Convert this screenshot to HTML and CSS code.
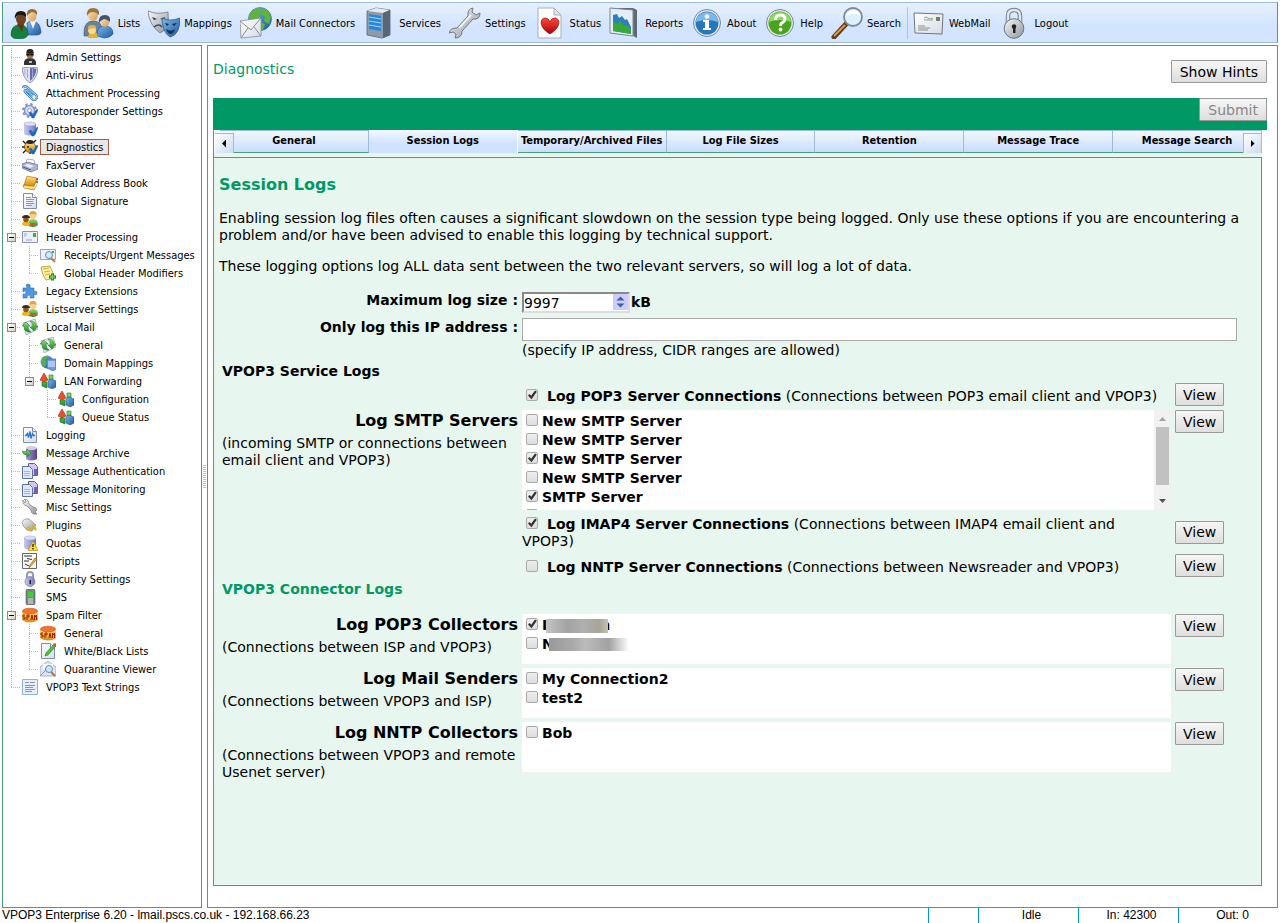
FILE: index.html
```
<!DOCTYPE html>
<html lang="en">
<head>
  <meta charset="UTF-8">
  <title>VPOP3 Enterprise - Diagnostics</title>
  <meta name="viewport" content="width=device-width, initial-scale=1.0">
  <link rel="stylesheet" href="styles.css">
</head>
<body>
  <!-- icon set -->
  <svg class="sprite" width="0" height="0" aria-hidden="true">
    <defs>
      <linearGradient id="gBlue" x2="1" y2="1"><stop offset="0" stop-color="#7db8ee"/><stop offset="1" stop-color="#1d5a9c"/></linearGradient>
      <linearGradient id="gGrey" x2="1" y2="1"><stop offset="0" stop-color="#fafafa"/><stop offset="1" stop-color="#8d959c"/></linearGradient>
      <linearGradient id="gLilac" x2="1"><stop offset="0" stop-color="#c8caf0"/><stop offset="1" stop-color="#7379b8"/></linearGradient>
      <linearGradient id="gPurple" x2="1"><stop offset="0" stop-color="#a99bd0"/><stop offset="1" stop-color="#55418c"/></linearGradient>
      <linearGradient id="gGreen" x2="0" y2="1"><stop offset="0" stop-color="#8fdc6e"/><stop offset="1" stop-color="#1f8f28"/></linearGradient>
      <linearGradient id="gGold" x2="0" y2="1"><stop offset="0" stop-color="#ffe277"/><stop offset="1" stop-color="#d68a10"/></linearGradient>
      <linearGradient id="gSkin" x2="1" y2="1"><stop offset="0" stop-color="#ffe3b0"/><stop offset="1" stop-color="#d69a50"/></linearGradient>
      <linearGradient id="gRed" x2="0" y2="1"><stop offset="0" stop-color="#ff4a3c"/><stop offset="1" stop-color="#a80008"/></linearGradient>
      <linearGradient id="gPaper" x2="1" y2="1"><stop offset="0" stop-color="#fff"/><stop offset="1" stop-color="#d5dce8"/></linearGradient>
    </defs>

    <symbol id="t-users" viewBox="0 0 32 32">
      <path d="M17 16q2-2 5-2 8 0 9 11 0 3-5 3h-8z" fill="url(#gBlue)" stroke="#1b4a7c" stroke-width=".6"/>
      <path d="M20 14l3 8 3-8z" fill="#f4f4f4"/>
      <ellipse cx="22" cy="9" rx="4.500" ry="5.500" fill="url(#gSkin)"/>
      <path d="M17 9q-1-7 5-7 6 0 5 6-2-3-5-3-3 1-5 4z" fill="#8e6f36"/>
      <path d="M1 28q0-10 8-10h3q6 1 6 10-2 4-9 4-7 0-8-4z" fill="#15803e" stroke="#0c5a2a" stroke-width=".6"/>
      <path d="M7 17l5 8 2-8z" fill="#5f3618"/>
      <ellipse cx="11" cy="12" rx="5" ry="6" fill="#6d421f"/>
      <path d="M5 12q-1-8 6-8 6 0 5 6-4-3-8-2-2 1-3 4z" fill="#1c1815"/>
    </symbol>
    <symbol id="t-lists" viewBox="0 0 32 32">
      <path d="M2 29q-1-15 9-15 9 0 9 9v6z" fill="#6a8399" stroke="#3f5468" stroke-width=".6"/>
      <ellipse cx="11" cy="8" rx="5" ry="6" fill="url(#gSkin)"/>
      <path d="M5 9q-1-8 6-8 7 0 6 7-3-3-6-3-4 0-6 4z" fill="#9a7340"/>
      <path d="M15 29q0-10 8-10 8 0 8 8-3 4-9 4z" fill="url(#gBlue)" stroke="#24588c" stroke-width=".6"/>
      <ellipse cx="23" cy="15" rx="4" ry="5" fill="url(#gSkin)"/>
      <path d="M17 16q-1-8 6-8 6 0 5 7-3-3-6-3-3 1-5 4z" fill="#45526a"/>
      <path d="M6 31q0-6 5-6 5 0 5 6z" fill="#e6b422"/>
      <circle cx="10" cy="23" r="4" fill="#ffd99b"/>
      <path d="M6 23q-1-5 4-5 5 0 4 4-4-2-8 1z" fill="#e0b04a"/>
    </symbol>
    <symbol id="t-masks" viewBox="0 0 32 32">
      <path d="M0 4q9 4 20 1 2 17-8 21Q1 18 0 4z" fill="url(#gGrey)" stroke="#6d747b" stroke-width=".8"/>
      <path d="M4 10l5 2-3 1zM12 12l5-2-1 3z" fill="#30363c"/>
      <path d="M6 20q5-4 8 0" fill="none" stroke="#454b52" stroke-width="1.500"/>
      <path d="M14 11q8 4 18 0 0 17-10 19-8-5-8-19z" fill="url(#gBlue)" stroke="#315d87" stroke-width=".8"/>
      <path d="M17 16l4 1-2 2zM24 17l5-1-3 3z" fill="#0e2742"/>
      <path d="M18 22q5 3 9 0-1 5-5 5-3-1-4-5z" fill="#143456"/>
    </symbol>
    <symbol id="t-mail" viewBox="0 0 32 32">
      <circle cx="20" cy="12" r="11.500" fill="url(#gBlue)" stroke="#2b5f91" stroke-width=".6"/>
      <path d="M9 9q2-7 10-8l3 3-3 3 2 4-6 3-2 4-4-4zM23 1q7 3 8 9l-2 7-5-3 1-4-4-3zM17 14l8 3-2 6h-4z" fill="#5eb53c"/>
      <path d="M0 14l21-3v18L1 31z" fill="url(#gPaper)" stroke="#8b8f94" stroke-width=".8"/>
      <path d="M0 14l11 9 10-12M1 31l7-10M21 29l-7-9" fill="none" stroke="#8b8f94"/>
    </symbol>
    <symbol id="t-server" viewBox="0 0 32 32">
      <path d="M4 4l9-3 14 2v25l-8 3-15-3z" fill="#8e9bab" stroke="#59646f" stroke-width=".8"/>
      <path d="M4 4l9-3 14 2-7 3z" fill="#e4eaf2"/>
      <path d="M20 6l7-3v25l-7 3z" fill="#596675"/>
      <path d="M6 7l12 2v15l-12-2z" fill="#2a86d6"/>
      <path d="M6 10l12 2M6 14l12 2M6 18l12 2" stroke="#9fd6ff" stroke-width="1.200"/>
    </symbol>
    <symbol id="t-wrench" viewBox="0 0 32 32">
      <path d="M24 1q-6 1-5 8L8 21q-7 0-8 5l4-1 3 2-1 4q7 0 7-7l11-12q7 1 7-6l-4 2-4-3z" fill="url(#gGrey)" stroke="#74797e"/>
      <path d="M10 21L22 8" stroke="#fff" stroke-width="1.500"/>
    </symbol>
    <symbol id="t-heart" viewBox="0 0 32 32">
      <path d="M4 1h16l7 7v23H4z" fill="#fdfdfd" stroke="#a7b0ba"/>
      <path d="M20 1v7h7z" fill="#dfe5ec" stroke="#a7b0ba"/>
      <path d="M16 27C4 20 6 11 11 11q4 0 5 4 1-4 5-4c5 0 7 9-5 16z" fill="url(#gRed)" stroke="#8d0005" stroke-width=".6"/>
    </symbol>
    <symbol id="t-chart" viewBox="0 0 32 32">
      <path d="M1 1h23l4 2v28l-4-2-23-3z" fill="#5f6b73"/>
      <path d="M1 1l23 2v26L1 26z" fill="#e3eef6" stroke="#7e888f"/>
      <path d="M4 8l4-1 2 4 3-2 3 4 2-1 4 8v7L4 24z" fill="#2c80bd"/>
      <path d="M4 14l4 3 4-3 3 5 3-1 4 5v4L4 24z" fill="#38a83b"/>
    </symbol>
    <symbol id="t-about" viewBox="0 0 32 32">
      <circle cx="16" cy="16" r="13.500" fill="#e4e9ee" stroke="#7d8790"/>
      <circle cx="16" cy="16" r="11.500" fill="#2478bd"/>
      <path d="M5 15a11 10 0 0 1 22 0q-11-4-22 0z" fill="#7db9e8"/>
      <circle cx="16" cy="9.500" r="2.300" fill="#fff"/>
      <path d="M12 13h6v8h2v2h-8v-2h2v-6h-2z" fill="#fff"/>
    </symbol>
    <symbol id="t-help" viewBox="0 0 32 32">
      <circle cx="16" cy="16" r="13.500" fill="#e4e9ee" stroke="#7d8790"/>
      <circle cx="16" cy="16" r="11.500" fill="#46a51c"/>
      <path d="M5 15a11 10 0 0 1 22 0q-11-4-22 0z" fill="#8fd768"/>
      <path d="M11.500 13q0-5 5-5 4.500 0 4.500 4 0 2-2.500 3.500-2 1-2 3.500" fill="none" stroke="#fff" stroke-width="3"/>
      <circle cx="16.500" cy="22.500" r="1.900" fill="#fff"/>
    </symbol>
    <symbol id="t-search" viewBox="0 0 32 32">
      <path d="M15 17L3 30" stroke="#60401c" stroke-width="5" stroke-linecap="round"/>
      <path d="M14 18L3 29" stroke="#d39a4e" stroke-width="2"/>
      <circle cx="22" cy="10" r="9" fill="#dcf0fd" stroke="#7f8a94" stroke-width="1.800"/>
      <path d="M15 9q2-6 8-6 5 0 6 5-7-3-14 1z" fill="#fff"/>
    </symbol>
    <symbol id="t-letter" viewBox="0 0 32 32">
      <path d="M1 6l29 1-1 20-27-1z" fill="url(#gPaper)" stroke="#73777b"/>
      <path d="M23 10h4v4h-4z" fill="#71805a"/>
      <path d="M11 11q2-2 4 0t5 0M11 13h9" stroke="#999" fill="none"/>
      <path d="M5 19h7M5 21h12M5 23h10" stroke="#8c8c8c"/>
    </symbol>
    <symbol id="t-lock" viewBox="0 0 32 32">
      <path d="M9 17V9q0-6 6-6t6 6v8" fill="none" stroke="#737e88" stroke-width="4.500"/>
      <path d="M9 17V9q0-6 6-6t6 6v8" fill="none" stroke="#dfe6ec" stroke-width="2.500"/>
      <circle cx="15" cy="21.500" r="9.800" fill="url(#gGrey)" stroke="#68737d"/>
      <circle cx="15" cy="19.500" r="2.200" fill="#222"/>
      <path d="M14 20h2.500v6H14z" fill="#222"/>
    </symbol>

    <symbol id="i-admin" viewBox="0 0 16 16">
      <path d="M2 16q-1-7 6-7t6 7z" fill="#303338"/>
      <ellipse cx="8" cy="5" rx="3.600" ry="4.500" fill="#a8713e"/>
      <path d="M4.500 4Q4 0 8 0t3.500 4z" fill="#272320"/>
      <path d="M4.500 4.500h7v2h-3v-1h-1v1h-3z" fill="#000"/>
      <path d="M7 12h3v2H7z" fill="#b8bec5"/>
    </symbol>
    <symbol id="i-shield" viewBox="0 0 16 16">
      <path d="M0 1q8-2 16 0-1 11-8 15Q1 12 0 1z" fill="#dfe2f2" stroke="#8f93b8"/>
      <path d="M8 1q3 0 6.500 1-1 8-6.500 12z" fill="#676db2"/>
      <path d="M3 2v6M5.500 2v9M10.500 2v9" stroke="#a3a7d2"/>
    </symbol>
    <symbol id="i-clip" viewBox="0 0 16 16">
      <path d="M1 3q1-3 4-1l9 8q2 3 0 4-2 2-4 0L3 7q-1-2 1-2l7 6" fill="none" stroke="#3c83c8" stroke-width="2.400"/>
      <path d="M1 3q1-3 4-1l9 8q2 3 0 4-2 2-4 0L3 7q-1-2 1-2l7 6" fill="none" stroke="#b4daf7" stroke-width="1"/>
    </symbol>
    <symbol id="i-tick" viewBox="0 0 16 16">
      <path d="M7 10l2-1 2 3 4-6 1 1-4 8h-2z" fill="#1766c8" stroke="#1766c8" stroke-width=".5"/>
    </symbol>
    <symbol id="i-gear" viewBox="0 0 16 16">
      <circle cx="7.500" cy="7.500" r="5" fill="#dce2f8" stroke="#8591c9" stroke-width="1.500"/>
      <circle cx="7.500" cy="7.500" r="6.500" fill="none" stroke="#8591c9" stroke-width="2" stroke-dasharray="2.500 2.600"/>
      <circle cx="7.500" cy="7.500" r="2" fill="#fff" stroke="#8591c9"/>
      <use href="#i-tick"/>
    </symbol>
    <symbol id="i-cyl" viewBox="0 0 16 16">
      <path d="M2 3v10q5 3 12 0V3z" fill="url(#gLilac)"/>
      <ellipse cx="8" cy="3" rx="6" ry="2" fill="#dcdef7" stroke="#9296cb" stroke-width=".5"/>
    </symbol>
    <symbol id="i-database" viewBox="0 0 16 16"><use href="#i-cyl"/><use href="#i-tick"/></symbol>
    <symbol id="i-bug" viewBox="0 0 16 16">
      <path d="M1 2l4 4M14 1l-4 4M0 8h4M1 14l4-4M15 8h-4M8 12v3" stroke="#161616" stroke-width="1.300"/>
      <circle cx="8" cy="8" r="5.500" fill="url(#gGold)" stroke="#654100" stroke-width=".7"/>
      <path d="M4 4q0-3 4-3t4 3q-4 2-8 0z" fill="#24231f"/>
      <circle cx="6" cy="8" r="1" fill="#222"/>
      <use href="#i-tick"/>
    </symbol>
    <symbol id="i-fax" viewBox="0 0 16 16">
      <path d="M4 6l1-4 7 1 1 4z" fill="#fff" stroke="#8c93ac" stroke-width=".7"/>
      <path d="M0 7l6-2 10 3v4l-7 3-9-4z" fill="#aab2d6" stroke="#656d95" stroke-width=".7"/>
      <path d="M2 8l4-1 6 2-4 2z" fill="#eef1fc"/>
      <path d="M1 10l8 3" stroke="#4d5580"/>
    </symbol>
    <symbol id="i-book" viewBox="0 0 16 16">
      <path d="M5 1l10 2-2 8-11-1z" fill="url(#gGold)" stroke="#9d690b" stroke-width=".6"/>
      <path d="M1 10l11 1 3-7v5l-3 6-10-2z" fill="#f1c24b" stroke="#a5751c" stroke-width=".6"/>
      <path d="M2 12l10 1 3-5" fill="none" stroke="#fff" stroke-width="1"/>
      <path d="M14 3h2v2h-2z" fill="#d9412b"/><path d="M14 6h2v2h-2z" fill="#3da53a"/>
    </symbol>
    <symbol id="i-doc" viewBox="0 0 16 16">
      <path d="M1.500 .5h9l4 4v11h-13z" fill="url(#gPaper)" stroke="#7b8fae"/>
      <path d="M10.500 .5v4h4" fill="#fff" stroke="#7b8fae"/>
    </symbol>
    <symbol id="i-sign" viewBox="0 0 16 16">
      <use href="#i-doc"/><path d="M4 4.500h5M4 6.500h8M4 8.500h7M4 10.500h8M4 12.500h6" stroke="#8b98b0"/>
    </symbol>
    <symbol id="i-groups" viewBox="0 0 16 16">
      <path d="M6 15q0-7 5-7t5 6q-2 2-5 2z" fill="url(#gGreen)"/>
      <circle cx="11" cy="4.500" r="3.400" fill="#f8cf8d"/>
      <path d="M7.500 4Q7 0 11 0t3.500 4q-3-2-7 0z" fill="#dca542"/>
      <path d="M0 14q0-4 4-4t4 4q-4 2-8 0z" fill="#e7bb1b"/>
      <path d="M8 12h5v3H8z" fill="#d5532f"/>
      <circle cx="4" cy="8.500" r="2.800" fill="#8d5524"/>
      <path d="M0 7q0-3 4-3t4 3z" fill="#3d2c1c"/>
    </symbol>
    <symbol id="i-header" viewBox="0 0 16 16">
      <path d="M.5 2.500h15v11H.5z" fill="#eef0f9" stroke="#8c93bb"/>
      <path d="M11 4h3v4h-3z" fill="#46a843"/><path d="M2 5h3M2 7h2M4 11h6" stroke="#9aa1c2"/>
    </symbol>
    <symbol id="i-lens" viewBox="0 0 16 16">
      <path d="M11 11l4 4" stroke="#b77d40" stroke-width="2"/>
      <circle cx="9" cy="8" r="3.500" fill="#c4eafe" stroke="#6e8bae"/>
    </symbol>
    <symbol id="i-receipt" viewBox="0 0 16 16">
      <path d="M.5 2.500h15v10H.5z" fill="#eef0f9" stroke="#9aa1c2"/><path d="M12 4h2v2h-2z" fill="#46a843"/><use href="#i-lens"/>
    </symbol>
    <symbol id="i-modify" viewBox="0 0 16 16">
      <path d="M1 2l9-1q2 4 5 12l-9 2Q2 10 1 2z" fill="#fff0a3" stroke="#c5a93e"/>
      <path d="M3 4l6-1M4 7l6-1M5 10l5-1" stroke="#c8aa4c"/>
      <path d="M9 12h7M12.500 8.500v7" stroke="#19762a" stroke-width="3"/><path d="M10 12h5M12.500 9.500v5" stroke="#76d95a" stroke-width="1.400"/>
    </symbol>
    <symbol id="i-puzzle" viewBox="0 0 16 16">
      <path d="M1 5h4q-2-4 1-4t2 4h4v4q3-2 3 1t-3 1v4H8q1-3-1-3t-2 3H1v-4q3 1 3-1.500T1 9z" fill="#4f97dc" stroke="#2c6cae" stroke-width=".6"/>
    </symbol>
    <symbol id="i-local" viewBox="0 0 16 16">
      <path d="M1 4l12-4 3 10-12 6z" fill="#e6e9f3" stroke="#949cb2" stroke-width=".7"/>
      <path d="M0 7l4-4 4 4H6q0 4 3 6-7 1-7-6z" fill="url(#gGreen)" stroke="#1b7423" stroke-width=".5"/>
      <path d="M16 7l-4 5-4-4h2q1-4-2-6 6 0 6 5z" fill="url(#gGreen)" stroke="#1b7423" stroke-width=".5"/>
    </symbol>
    <symbol id="i-domain" viewBox="0 0 16 16">
      <circle cx="7" cy="7" r="6.500" fill="url(#gBlue)"/>
      <path d="M2 3q4-3 6-2L6 5l1 3-3 4Q0 9 2 3z" fill="#55ad55"/>
      <path d="M7 4h9v10l-3 2-6-3z" fill="#6f9ee0" stroke="#395c93" stroke-width=".6"/>
      <path d="M8 7h7M8 9h7M8 11h7" stroke="#e4f1ff"/>
    </symbol>
    <symbol id="i-lan" viewBox="0 0 16 16">
      <path d="M4 0l4 7-4 2-4-2z" fill="#ee4c2a" stroke="#a62a13" stroke-width=".6"/>
      <path d="M9 2h4v5H9zM2 9h5v6l-5-2z" fill="url(#gGreen)" stroke="#1b7423" stroke-width=".6"/>
      <path d="M8 8l3-2 5 2v6l-4 2-4-2z" fill="url(#gBlue)" stroke="#24528b" stroke-width=".6"/>
    </symbol>
    <symbol id="i-log" viewBox="0 0 16 16">
      <use href="#i-doc"/><path d="M3 8.500h1l1.500-2 1 4 1.500-6 1 7 1.500-5 1 2H13" fill="none" stroke="#2775ca" stroke-width="1.300"/>
    </symbol>
    <symbol id="i-archive" viewBox="0 0 16 16">
      <path d="M4 3v11q5 3 11 0V3z" fill="url(#gPurple)"/><ellipse cx="9.500" cy="3" rx="5.500" ry="2" fill="#d4cde9"/>
      <path d="M0 6q2 1 5 0V4l4 4-4 4v-2Q1 10 0 6z" fill="url(#gGreen)" stroke="#1b7423" stroke-width=".5"/>
    </symbol>
    <symbol id="i-msgs" viewBox="0 0 16 16">
      <path d="M6.500 .5h6l3 3v9h-9z" fill="#cfc9ec" stroke="#6a5a9e"/>
      <path d="M12 6h3v6h-3z" fill="#7c60ad"/>
      <path d="M.5 3.500h7l3 3v9H.5z" fill="#dfe8fa" stroke="#5b74a8"/><path d="M2 8.500h6M2 10.500h6M2 12.500h6" stroke="#a4b7dc"/>
    </symbol>
    <symbol id="i-tool" viewBox="0 0 16 16">
      <path d="M1 1q-1 5 4 6l4 4q0 5 6 4l-2-2 2-2q-1-3-4-3L7 5q0-5-5-5l2 2-1 2z" fill="url(#gGrey)" stroke="#777" stroke-width=".7"/>
    </symbol>
    <symbol id="i-plug" viewBox="0 0 16 16">
      <path d="M0 5q2-4 7-3l7 6-4 6-5-1Q0 9 0 5z" fill="url(#gGrey)" stroke="#777" stroke-width=".6"/>
      <path d="M6 10l3 4M11 9l3 4" stroke="#e3ae16" stroke-width="2.600"/>
    </symbol>
    <symbol id="i-quota" viewBox="0 0 16 16">
      <use href="#i-cyl"/><path d="M11 6l5 9.500H6z" fill="#ffd92c" stroke="#b78a00" stroke-width=".6"/><path d="M11 9v3M11 13v1.500" stroke="#222" stroke-width="1.300"/>
    </symbol>
    <symbol id="i-script" viewBox="0 0 16 16">
      <path d="M.5 .5h14v15H.5z" fill="#fafafa" stroke="#666"/><path d="M2 3h8M5 5.500l5 1M2 8h5M3 11l4 2" stroke="#333"/>
      <path d="M15 6l-6 7-2 2 1-3 5-7z" fill="#e5b437" stroke="#7d5c10" stroke-width=".6"/>
    </symbol>
    <symbol id="i-lock" viewBox="0 0 16 16">
      <path d="M5 8V4q0-3 3-3t3 3v4" fill="none" stroke="#9599b8" stroke-width="2"/>
      <circle cx="8" cy="10.500" r="5" fill="url(#gLilac)" stroke="#6d7192" stroke-width=".6"/><path d="M7.500 9h1.500v4H7.500z" fill="#222"/>
    </symbol>
    <symbol id="i-phone" viewBox="0 0 16 16">
      <rect x="4" y="0" width="9" height="16" rx="2" fill="#7e8589" stroke="#4c5256" stroke-width=".6"/>
      <path d="M6 3h5v5H6z" fill="#49c93c"/><path d="M6 10h5M6 12h5M6 14h5" stroke="#e2e6e8"/>
    </symbol>
    <symbol id="i-spam" viewBox="0 0 16 16">
      <path d="M0 4v9q8 5 16 0V4z" fill="url(#gGold)"/>
      <ellipse cx="8" cy="4" rx="7.500" ry="2.800" fill="#f3722c" stroke="#c4501a" stroke-width=".6"/>
      <path d="M3 8H1v2h2v2H1M5 13V8h2v2H5M9 13l1-5 1 5M12.500 13V8l1 2 1-2v5" fill="none" stroke="#a31b0c"/>
    </symbol>
    <symbol id="i-edit" viewBox="0 0 16 16">
      <use href="#i-doc"/><path d="M14 1l2 2-8 9-3 1 1-3z" fill="#54bd39" stroke="#1f7a22" stroke-width=".6"/><path d="M13 1l2-1 1 1v2l-1 1z" fill="#e2443a"/>
    </symbol>
    <symbol id="i-quarantine" viewBox="0 0 16 16">
      <path d="M0 6l8-6 8 6v9H0z" fill="#dfe3f8" stroke="#8d95c4" stroke-width=".7"/><path d="M3 3h10v6H3z" fill="#fff"/><path d="M0 15l6-6M16 15l-4-4" stroke="#8d95c4"/><use href="#i-lens"/>
    </symbol>
    <symbol id="i-text" viewBox="0 0 16 16">
      <path d="M.5 .5h15v15H.5z" fill="#e6effb" stroke="#91b1dc"/><path d="M3 3.500h4M8 3.500h5M3 6.500h10M3 8.500h8M3 10.500h10M3 12.500h7" stroke="#8795ab"/>
    </symbol>
  </svg>

  <nav class="toolbar">
    <a href="#"><svg><use href="#t-users"/></svg><span>Users</span></a>
    <a href="#"><svg><use href="#t-lists"/></svg><span>Lists</span></a>
    <a href="#"><svg><use href="#t-masks"/></svg><span>Mappings</span></a>
    <a href="#"><svg><use href="#t-mail"/></svg><span>Mail Connectors</span></a>
    <a href="#"><svg><use href="#t-server"/></svg><span>Services</span></a>
    <a href="#"><svg><use href="#t-wrench"/></svg><span>Settings</span></a>
    <a href="#"><svg><use href="#t-heart"/></svg><span>Status</span></a>
    <a href="#"><svg><use href="#t-chart"/></svg><span>Reports</span></a>
    <a href="#"><svg><use href="#t-about"/></svg><span>About</span></a>
    <a href="#"><svg><use href="#t-help"/></svg><span>Help</span></a>
    <a href="#" class="before-sep"><svg><use href="#t-search"/></svg><span>Search</span></a>
    <a href="#"><svg><use href="#t-letter"/></svg><span>WebMail</span></a>
    <a href="#"><svg><use href="#t-lock"/></svg><span>Logout</span></a>
  </nav>

  <div class="workspace">
    <aside class="sidebar">
      <ul class="tree">
        <li><div class="node"><svg><use href="#i-admin"/></svg><a href="#">Admin Settings</a></div></li>
        <li><div class="node"><svg><use href="#i-shield"/></svg><a href="#">Anti-virus</a></div></li>
        <li><div class="node"><svg><use href="#i-clip"/></svg><a href="#">Attachment Processing</a></div></li>
        <li><div class="node"><svg><use href="#i-gear"/></svg><a href="#">Autoresponder Settings</a></div></li>
        <li><div class="node"><svg><use href="#i-database"/></svg><a href="#">Database</a></div></li>
        <li><div class="node"><svg><use href="#i-bug"/></svg><a href="#" class="selected">Diagnostics</a></div></li>
        <li><div class="node"><svg><use href="#i-fax"/></svg><a href="#">FaxServer</a></div></li>
        <li><div class="node"><svg><use href="#i-book"/></svg><a href="#">Global Address Book</a></div></li>
        <li><div class="node"><svg><use href="#i-sign"/></svg><a href="#">Global Signature</a></div></li>
        <li><div class="node"><svg><use href="#i-groups"/></svg><a href="#">Groups</a></div></li>
        <li>
          <div class="node"><button class="toggle" aria-label="Collapse"></button><svg><use href="#i-header"/></svg><a href="#">Header Processing</a></div>
          <ul>
            <li><div class="node"><svg><use href="#i-receipt"/></svg><a href="#">Receipts/Urgent Messages</a></div></li>
            <li><div class="node"><svg><use href="#i-modify"/></svg><a href="#">Global Header Modifiers</a></div></li>
          </ul>
        </li>
        <li><div class="node"><svg><use href="#i-puzzle"/></svg><a href="#">Legacy Extensions</a></div></li>
        <li><div class="node"><svg><use href="#i-groups"/></svg><a href="#">Listserver Settings</a></div></li>
        <li>
          <div class="node"><button class="toggle" aria-label="Collapse"></button><svg><use href="#i-local"/></svg><a href="#">Local Mail</a></div>
          <ul>
            <li><div class="node"><svg><use href="#i-local"/></svg><a href="#">General</a></div></li>
            <li><div class="node"><svg><use href="#i-domain"/></svg><a href="#">Domain Mappings</a></div></li>
            <li>
              <div class="node"><button class="toggle" aria-label="Collapse"></button><svg><use href="#i-lan"/></svg><a href="#">LAN Forwarding</a></div>
              <ul>
                <li><div class="node"><svg><use href="#i-lan"/></svg><a href="#">Configuration</a></div></li>
                <li><div class="node"><svg><use href="#i-lan"/></svg><a href="#">Queue Status</a></div></li>
              </ul>
            </li>
          </ul>
        </li>
        <li><div class="node"><svg><use href="#i-log"/></svg><a href="#">Logging</a></div></li>
        <li><div class="node"><svg><use href="#i-archive"/></svg><a href="#">Message Archive</a></div></li>
        <li><div class="node"><svg><use href="#i-msgs"/></svg><a href="#">Message Authentication</a></div></li>
        <li><div class="node"><svg><use href="#i-msgs"/></svg><a href="#">Message Monitoring</a></div></li>
        <li><div class="node"><svg><use href="#i-tool"/></svg><a href="#">Misc Settings</a></div></li>
        <li><div class="node"><svg><use href="#i-plug"/></svg><a href="#">Plugins</a></div></li>
        <li><div class="node"><svg><use href="#i-quota"/></svg><a href="#">Quotas</a></div></li>
        <li><div class="node"><svg><use href="#i-script"/></svg><a href="#">Scripts</a></div></li>
        <li><div class="node"><svg><use href="#i-lock"/></svg><a href="#">Security Settings</a></div></li>
        <li><div class="node"><svg><use href="#i-phone"/></svg><a href="#">SMS</a></div></li>
        <li>
          <div class="node"><button class="toggle" aria-label="Collapse"></button><svg><use href="#i-spam"/></svg><a href="#">Spam Filter</a></div>
          <ul>
            <li><div class="node"><svg><use href="#i-spam"/></svg><a href="#">General</a></div></li>
            <li><div class="node"><svg><use href="#i-edit"/></svg><a href="#">White/Black Lists</a></div></li>
            <li><div class="node"><svg><use href="#i-quarantine"/></svg><a href="#">Quarantine Viewer</a></div></li>
          </ul>
        </li>
        <li><div class="node"><svg><use href="#i-text"/></svg><a href="#">VPOP3 Text Strings</a></div></li>
      </ul>
    </aside>
    <div class="splitter"><span class="grip"></span></div>

    <main class="content">
      <header class="page-head">
        <h1>Diagnostics</h1>
        <button class="btn">Show Hints</button>
      </header>
      <div class="action-bar"><button class="btn" disabled>Submit</button></div>

      <div class="tabs">
        <div class="tab-strip" role="tablist">
          <button class="tab" role="tab">General</button>
          <button class="tab active" role="tab" aria-selected="true">Session Logs</button>
          <button class="tab" role="tab">Temporary/Archived Files</button>
          <button class="tab" role="tab">Log File Sizes</button>
          <button class="tab" role="tab">Retention</button>
          <button class="tab" role="tab">Message Trace</button>
          <button class="tab" role="tab">Message Search</button>
          <button class="scroll-tabs prev" aria-label="Previous tabs"></button>
          <button class="scroll-tabs next" aria-label="Next tabs"></button>
        </div>

        <section class="panel">
          <h2>Session Logs</h2>
          <p>Enabling session log files often causes a significant slowdown on the session type being logged. Only use these options if you are encountering a problem and/or have been advised to enable this logging by technical support.</p>
          <p>These logging options log ALL data sent between the two relevant servers, so will log a lot of data.</p>

          <form class="settings">
            <label class="field-label" for="maxSize">Maximum log size :</label>
            <div class="wide size-field">
              <span class="spinner">
                <input type="text" inputmode="numeric" id="maxSize" value="9997">
                <svg viewBox="0 0 15 16" aria-hidden="true"><path d="M3.500 6.500l4-4 4 4zM3.500 9.500l4 4 4-4z" fill="#3565a5"/></svg>
              </span>
              <b>kB</b>
            </div>

            <label class="field-label" for="ipFilter">Only log this IP address :</label>
            <div class="wide">
              <input type="text" class="text-box" id="ipFilter">
              <div class="note">(specify IP address, CIDR ranges are allowed)</div>
            </div>

            <h3>VPOP3 Service Logs</h3>

            <label class="option"><input type="checkbox" checked><b>Log POP3 Server Connections</b> (Connections between POP3 email client and VPOP3)</label>
            <button type="button" class="btn">View</button>

            <div class="group">
              <h4>Log SMTP Servers</h4>
              <span>(incoming SMTP or connections between email client and VPOP3)</span>
            </div>
            <div class="list tall">
              <div class="items">
                <label><input type="checkbox">New SMTP Server</label>
                <label><input type="checkbox">New SMTP Server</label>
                <label><input type="checkbox" checked>New SMTP Server</label>
                <label><input type="checkbox">New SMTP Server</label>
                <label><input type="checkbox" checked>SMTP Server</label>
                <label><input type="checkbox" aria-label="Server 6"></label>
              </div>
              <div class="scrollbar" aria-hidden="true"><i class="up"></i><i class="thumb"></i><i class="down"></i></div>
            </div>
            <button type="button" class="btn">View</button>

            <label class="option two-line"><input type="checkbox" checked><b>Log IMAP4 Server Connections</b> (Connections between IMAP4 email client and VPOP3)</label>
            <button type="button" class="btn middle">View</button>

            <label class="option"><input type="checkbox"><b>Log NNTP Server Connections</b> (Connections between Newsreader and VPOP3)</label>
            <button type="button" class="btn">View</button>

            <h3 class="connector">VPOP3 Connector Logs</h3>

            <div class="group">
              <h4>Log POP3 Collectors</h4>
              <span>(Connections between ISP and VPOP3)</span>
            </div>
            <div class="list">
              <div class="items">
                <label><input type="checkbox" checked>I<span class="redacted"></span>n</label>
                <label><input type="checkbox">N<span class="redacted long"></span></label>
              </div>
            </div>
            <button type="button" class="btn">View</button>

            <div class="group">
              <h4>Log Mail Senders</h4>
              <span>(Connections between VPOP3 and ISP)</span>
            </div>
            <div class="list">
              <div class="items">
                <label><input type="checkbox">My Connection2</label>
                <label><input type="checkbox">test2</label>
              </div>
            </div>
            <button type="button" class="btn">View</button>

            <div class="group">
              <h4>Log NNTP Collectors</h4>
              <span>(Connections between VPOP3 and remote Usenet server)</span>
            </div>
            <div class="list">
              <div class="items">
                <label><input type="checkbox">Bob</label>
              </div>
            </div>
            <button type="button" class="btn">View</button>
          </form>
        </section>
      </div>
    </main>
  </div>

  <footer class="status">
    <span class="product">VPOP3 Enterprise 6.20 - lmail.pscs.co.uk - 192.168.66.23</span>
    <span class="cell small"></span>
    <span class="cell">Idle</span>
    <span class="cell">In: 42300</span>
    <span class="cell">Out: 0</span>
  </footer>
</body>
</html>
```
FILE: styles.css
```
* {
  box-sizing: border-box;
}

body {
  margin: 0;
  min-height: 100vh;
  display: flex;
  flex-direction: column;
  background: #fff;
  color: #000;
  font-family: "DejaVu Sans", Verdana, sans-serif;
  font-size: 14px;
  line-height: 17px;
}

button, input {
  font-family: inherit;
  font-size: inherit;
  color: inherit;
}

a {
  color: inherit;
  text-decoration: none;
}

.sprite {
  display: block;
}

/* toolbar */
.toolbar {
  display: flex;
  align-items: center;
  gap: 8px;
  height: 41px;
  margin: 2px 2px 2px;
  padding: 0 7px;
  border: 1px solid #9bbcdc;
  border-left-color: #4a9f78;
  border-right-color: #4a9f78;
  background: linear-gradient(#e6f1ff, #d2e4ff 60%, #d2e4ff);
  font-family: "DejaVu Sans Condensed", Tahoma, sans-serif;
  font-size: 11px;
}

.toolbar a {
  display: flex;
  align-items: center;
  gap: 4px;
  white-space: nowrap;
}

.toolbar span {
  padding-top: 2px;
}

.toolbar svg {
  width: 32px;
  height: 32px;
}

.toolbar .before-sep {
  padding-right: 6px;
  margin-right: -3px;
  border-right: 1px solid #a9c6e8;
}

/* panes */
.workspace {
  flex: 1;
  display: flex;
  margin: 0 2px;
}

.sidebar {
  width: 200px;
  flex: none;
  border: 1px solid #4a9f78;
  padding: 2px 0 0 8px;
  font-family: "DejaVu Sans Condensed", Tahoma, sans-serif;
  font-size: 11px;
}

.splitter {
  width: 5px;
  display: flex;
  align-items: center;
  justify-content: center;
}

.grip {
  width: 3px;
  height: 24px;
  background: repeating-linear-gradient(#bbb 0 1px, #fff 1px 2px);
}

/* tree */
.tree, .tree ul {
  list-style: none;
  margin: 0;
  padding: 0;
}

.tree ul {
  margin-left: 7px;
}

.tree li {
  padding-left: 11px;
  background:
    repeating-linear-gradient(#bbb 0 1px, transparent 1px 2px) 0 0 / 1px 100% no-repeat,
    repeating-linear-gradient(to right, #bbb 0 1px, transparent 1px 2px) 0 9px / 9px 1px no-repeat;
}

.tree li:last-child {
  background-size: 1px 9px, 9px 1px;
}

.node {
  display: flex;
  align-items: center;
  height: 18px;
}

.node svg {
  width: 16px;
  height: 16px;
  flex: none;
  margin-right: 2px;
}

.node a {
  padding: 1px 5px 0;
  border: 1px solid transparent;
  line-height: 13px;
  white-space: nowrap;
}

.node .selected {
  border-color: #a05c48;
  background: #e9e6ea;
}

.toggle {
  width: 9px;
  height: 9px;
  flex: none;
  margin: 0 6px 0 -15px;
  padding: 0;
  border: 1px solid #7b8da5;
  background: linear-gradient(#000, #000) center / 5px 1px no-repeat, linear-gradient(135deg, #fff, #d5cfc3);
}

/* main pane */
.content {
  flex: 1;
  min-width: 0;
  display: flex;
  flex-direction: column;
  border: 1px solid #4a9f78;
  padding: 14px 10px 21px 5px;
}

.page-head {
  display: flex;
  justify-content: space-between;
  align-items: flex-start;
  height: 38px;
}

h1 {
  margin: 0;
  font-size: 14px;
  line-height: 19px;
  font-weight: normal;
  color: #096;
}

.btn {
  height: 23px;
  padding: 0 7px;
  border: 1px solid #999;
  border-radius: 1px;
  background: linear-gradient(#f6f6f6, #dedede);
  line-height: 20px;
  white-space: nowrap;
}

.btn:disabled {
  color: #888;
}

.page-head .btn, .action-bar .btn {
  padding: 0 8px;
}

.action-bar {
  display: flex;
  justify-content: flex-end;
  height: 32px;
  background: #096;
}

.tabs {
  flex: 1;
  display: flex;
  flex-direction: column;
  margin-right: 5px;
}

.tab-strip {
  position: relative;
  display: flex;
  padding-left: 6px;
  height: 27px;
  border-left: 1px solid #4a9f78;
  background: linear-gradient(#fff 0 23px, #e7f6ef 23px);
}

.tab {
  flex: 1 1 0;
  min-width: 0;
  height: 23px;
  padding: 0 0 3px;
  border: 1px solid #9bbcdc;
  border-left: 0;
  border-bottom-color: #4a9f78;
  background: linear-gradient(#f2f7ff, #c8deff);
  font-family: "DejaVu Sans Condensed", Tahoma, sans-serif;
  font-size: 11px;
  font-weight: bold;
  white-space: nowrap;
}

.tab.active {
  border-color: #fff;
  border-bottom: 0;
  background: linear-gradient(#f2f7ff, #cfe2ff 60%);
}

.scroll-tabs {
  position: absolute;
  top: 3px;
  width: 19px;
  height: 20px;
  padding: 0;
  border: 1px solid #9bbcdc;
  border-bottom: 0;
  background: linear-gradient(135deg, #fff, #ccdcf0);
}

.scroll-tabs::before {
  content: "";
  display: block;
  width: 4px;
  height: 8px;
  margin: 0 auto;
  background: #000;
}

.prev {
  left: 1px;
  border-left: 0;
}

.prev::before {
  clip-path: polygon(0 50%, 100% 0, 100% 100%);
}

.next {
  right: 0;
}

.next::before {
  clip-path: polygon(100% 50%, 0 0, 0 100%);
}

.panel {
  flex: 1;
  border: 1px solid #4a9f78;
  padding: 18px 20px 24px 5px;
  background: #e7f6ef;
}

h2 {
  margin: 0 0 16px;
  font-size: 16px;
  line-height: 18px;
  color: #096;
}

.panel p {
  margin: 0 0 14px;
}

/* settings form */
.settings {
  display: grid;
  grid-template-columns: 296px minmax(0, 1fr) 62px;
  gap: 4px;
  align-items: start;
  margin: 16px 4px 0 3px;
}

.settings h3 {
  grid-column: 1 / -1;
  margin: 0;
  font-size: 14px;
  line-height: 16px;
}

.settings h3.connector {
  color: #096;
  margin-bottom: 13px;
}

.settings .btn {
  justify-self: start;
}

.settings .middle {
  align-self: center;
}

.field-label {
  padding-top: 1px;
  font-weight: bold;
  text-align: right;
}

.wide {
  grid-column: 2 / -1;
}

.size-field {
  display: flex;
  align-items: center;
  gap: 1px;
  height: 23px;
}

.spinner {
  display: flex;
  width: 108px;
  height: 21px;
  border: 2px inset #ddd;
  background: #fff;
}

.spinner input {
  flex: 1;
  min-width: 0;
  padding: 0;
  border: 0;
}

.spinner svg {
  width: 15px;
  height: 16px;
  background: #ccf;
}

.text-box {
  display: block;
  width: 100%;
  height: 23px;
  margin-bottom: 1px;
  border: 1px solid #a9a9a9;
}

.option {
  grid-column: 2;
  padding-top: 5px;
}

.option.two-line {
  padding-top: 2px;
}

input[type="checkbox"] {
  appearance: none;
  width: 12px;
  height: 12px;
  margin: 0 4px;
  border: 1px solid #aaa;
  border-radius: 2px;
  background: linear-gradient(#eee, #ddd);
}

input[type="checkbox"]:checked::before {
  content: "";
  display: block;
  width: 10px;
  height: 10px;
  background: #333;
  clip-path: polygon(10% 55%, 25% 40%, 42% 58%, 80% 5%, 98% 18%, 45% 92%);
}

.option input {
  margin-right: 9px;
}

.group h4 {
  margin: 0 0 3px;
  font-size: 16px;
  line-height: 22px;
  text-align: right;
}

.group span {
  display: block;
}

.list {
  display: flex;
  height: 50px;
  overflow: hidden;
  background: #fff;
}

.list.tall {
  height: 100px;
}

.items {
  flex: 1;
  padding-top: 1px;
}

.items label {
  display: flex;
  height: 19px;
  line-height: 21px;
  font-weight: bold;
}

.items input {
  margin-top: 3px;
}

.scrollbar {
  display: flex;
  flex-direction: column;
  align-items: center;
  width: 17px;
  background: #f1f1f1;
}

.scrollbar .up, .scrollbar .down {
  width: 7px;
  height: 4px;
}

.scrollbar .up {
  margin: 7px 0 6px;
  background: #a3a3a3;
  clip-path: polygon(50% 0, 100% 100%, 0 100%);
}

.scrollbar .down {
  margin: auto 0 7px;
  background: #505050;
  clip-path: polygon(0 0, 100% 0, 50% 100%);
}

.scrollbar .thumb {
  width: 13px;
  height: 58px;
  background: #c1c1c1;
}

/* masked connection names */
.redacted {
  position: relative;
  width: 62px;
  height: 14px;
  margin: 4px -8px 0 -1px;
  background: linear-gradient(to right, #c4c4c4, #a2a2a2 35%, #b0b0b0 60%, #a5a598 85%, #c5c2ae);
}

.redacted.long {
  width: 80px;
  height: 13px;
  margin-left: -5px;
  background: linear-gradient(to right, #999, #aaa 30%, #bbb 45%, #a2a2a2 75%, #fff);
}

/* status bar */
.status {
  display: flex;
  height: 15px;
  padding-left: 2px;
  font-family: "Liberation Sans", Arial, sans-serif;
  font-size: 12px;
  line-height: 14px;
}

.product {
  flex: 1;
}

.cell {
  width: 100px;
  padding-left: 6px;
  border-left: 1px solid #09c;
  text-align: center;
}

.cell.small {
  width: 50px;
}

.cell:last-child {
  width: 102px;
}
```
